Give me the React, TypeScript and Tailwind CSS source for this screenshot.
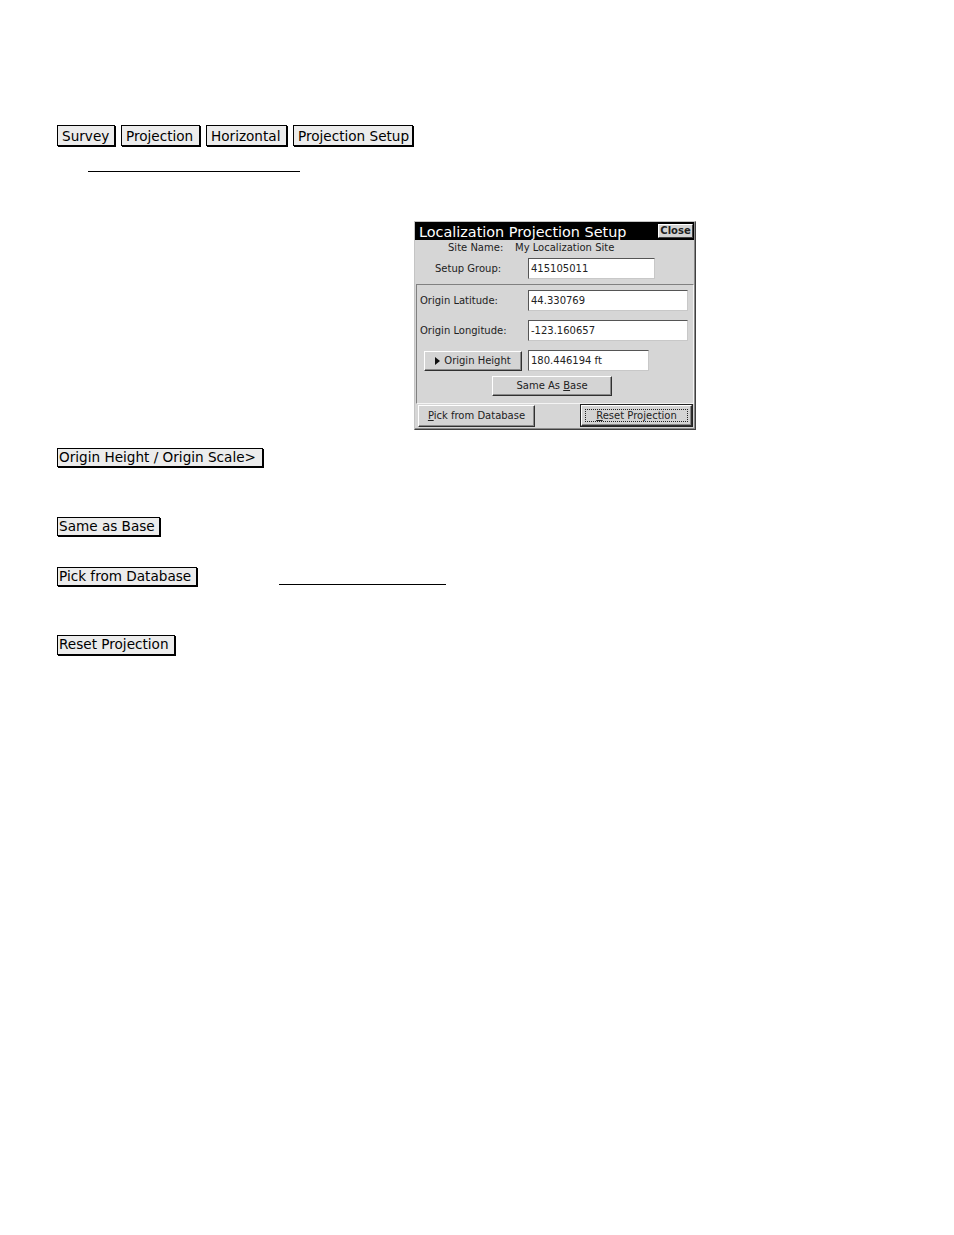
import React from "react";

const sans = { fontFamily: '"DejaVu Sans", Verdana, sans-serif' };

function DocButton({ label, w, h, pl = 1, pt = 0 }: { label: string; w: number; h: number; pl?: number; pt?: number }) {
  return (
    <div
      className="flex items-center border border-black bg-[#ececec] text-[13.6px] leading-none text-black whitespace-nowrap shadow-[1px_1px_0_#000]"
      style={{ width: w, height: h, paddingLeft: pl, paddingTop: pt }}
    >
      {label}
    </div>
  );
}

function WinButton({
  children,
  className = "",
  focus = false,
}: {
  children: React.ReactNode;
  className?: string;
  focus?: boolean;
}) {
  return (
    <div
      className={
        "flex items-center justify-center bg-[#d4d4d4] border border-t-white border-l-white border-r-[#303030] border-b-[#303030] shadow-[inset_-1px_-1px_0_#8a8a8a] text-[10px] leading-none text-[#222] whitespace-nowrap " +
        className
      }
    >
      {focus ? (
        <div className="flex items-center justify-center w-[calc(100%-6px)] h-[calc(100%-6px)] border border-dotted border-[#222]">
          {children}
        </div>
      ) : (
        children
      )}
    </div>
  );
}

function Field({ value, className = "" }: { value: string; className?: string }) {
  return (
    <div
      className={
        "flex items-center bg-white border border-t-[#555] border-l-[#555] border-r-[#c8c8c8] border-b-[#c8c8c8] pl-[2px] text-[10px] leading-none text-[#222] whitespace-nowrap " +
        className
      }
    >
      {value}
    </div>
  );
}

function Dialog() {
  return (
    <div className="w-[282px] h-[209px] border border-t-[#c4c4c4] border-l-[#c4c4c4] border-r-[#404040] border-b-[#404040] bg-[#d6d6d6]">
      <div className="h-full border-r border-b border-[#8a8a8a] flex flex-col">
        {/* title bar */}
        <div className="h-[18px] bg-black flex items-center justify-between pl-[4px] pr-[1px]">
          <span className="text-white text-[14.4px] leading-none whitespace-nowrap pt-[2px]">Localization Projection Setup</span>
          <div className="w-[35px] h-[14px] bg-[#d4d4d4] border border-t-white border-l-white border-r-[#404040] border-b-[#404040] flex items-center justify-center text-[10px] font-bold leading-none text-[#222]">
            Close
          </div>
        </div>
        {/* site name */}
        <div className="h-[16px] flex items-center text-[10px] leading-none text-[#222] whitespace-nowrap">
          <span className="pl-[33px] w-[100px]">Site Name:</span>
          <span>My Localization Site</span>
        </div>
        {/* setup group */}
        <div className="mt-[2px] h-[21px] flex items-center">
          <span className="pl-[20px] w-[113px] text-[10px] leading-none text-[#222] pt-[1px]">Setup Group:</span>
          <Field value="415105011" className="w-[127px] h-[21px]" />
        </div>
        {/* panel */}
        <div className="mt-[5px] ml-[1px] w-[278px] h-[120px] border border-t-[#808080] border-l-[#808080] border-r-[#f4f4f4] border-b-[#f4f4f4] flex flex-col">
          <div className="mt-[5px] h-[21px] flex items-center">
            <span className="pl-[3px] w-[111px] text-[10px] leading-none text-[#222] pt-[1px]">Origin Latitude:</span>
            <Field value="44.330769" className="w-[160px] h-[21px]" />
          </div>
          <div className="mt-[9px] h-[21px] flex items-center">
            <span className="pl-[3px] w-[111px] text-[10px] leading-none text-[#222] pt-[1px]">Origin Longitude:</span>
            <Field value="-123.160657" className="w-[160px] h-[21px]" />
          </div>
          <div className="mt-[9px] h-[21px] flex items-center">
            <WinButton className="ml-[7px] w-[98px] h-[20px]">
              <svg width="5" height="8" viewBox="0 0 5 8" className="mr-[4px]">
                <path d="M0 0 L5 4 L0 8 Z" fill="#111" />
              </svg>
              Origin Height
            </WinButton>
            <Field value="180.446194 ft" className="ml-[6px] w-[121px] h-[21px]" />
          </div>
          <WinButton className="mt-[5px] ml-[75px] w-[120px] h-[20px]">
            <span>
              Same As <span className="underline">B</span>ase
            </span>
          </WinButton>
        </div>
        {/* bottom buttons */}
        <div className="mt-[0px] flex items-center">
          <WinButton className="ml-[3px] w-[117px] h-[22px]">
            <span>
              <span className="underline">P</span>ick from Database
            </span>
          </WinButton>
          <div className="ml-auto mr-[1px] w-[113px] h-[23px] border border-[#222] flex">
            <WinButton focus className="w-full h-full">
              <span>
                <span className="underline">R</span>eset Projection
              </span>
            </WinButton>
          </div>
        </div>
      </div>
    </div>
  );
}

export default function App() {
  return (
    <div className="w-[954px] h-[1235px] bg-white" style={sans}>
      <div className="pt-[125px] pl-[57px] flex flex-col items-start">
        <div className="flex gap-[6px]">
          <DocButton label="Survey" w={58} h={21} pl={4} pt={2} />
          <DocButton label="Projection" w={79} h={21} pl={4} pt={2} />
          <DocButton label="Horizontal" w={81} h={21} pl={4} pt={2} />
          <DocButton label="Projection Setup" w={120} h={21} pl={4} pt={2} />
        </div>
        <div className="ml-[31px] mt-[25px] w-[212px] h-px bg-black" />
        <div className="ml-[357px] mt-[49px]">
          <Dialog />
        </div>
        <div className="mt-[18px]">
          <DocButton label="Origin Height / Origin Scale>" w={206} h={19} />
        </div>
        <div className="mt-[50px]">
          <DocButton label="Same as Base" w={103} h={19} />
        </div>
        <div className="mt-[31px] flex items-start">
          <DocButton label="Pick from Database" w={140} h={19} />
          <div className="ml-[82px] mt-[17px] w-[167px] h-px bg-black" />
        </div>
        <div className="mt-[49px]">
          <DocButton label="Reset Projection" w={118} h={20} />
        </div>
      </div>
    </div>
  );
}
